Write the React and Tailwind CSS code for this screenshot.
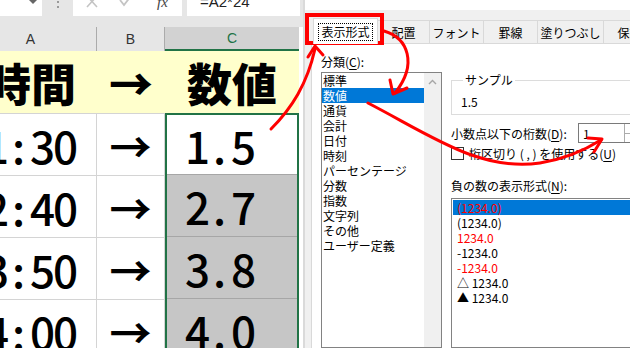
import React from 'react';

const categories = [ '標準', '数値', '通貨', '会計', '日付', '時刻', 'パーセンテージ', '分数', '指数', '文字列', 'その他', 'ユーザー定義' ];

const negatives = [
    { text: '(1234.0)', red: true },
    { text: '(1234.0)' },
    { text: '1234.0', red: true },
    { text: '-1234.0' },
    { text: '-1234.0', red: true },
    { text: '△ 1234.0' },
    { text: '▲ 1234.0' },
];

const rows = [
    { time: '1:30', value: '1.5' },
    { time: '2:40', value: '2.7' },
    { time: '3:50', value: '3.8' },
    { time: '4:00', value: '4.0' },
];

const tabs = [
    { label: '配置', width: 'w-[52px]' },
    { label: 'フォント', width: 'w-[54px]' },
    { label: '罫線', width: 'w-[54px]' },
    { label: '塗りつぶし', width: 'w-[66px]' },
    { label: '保護', width: 'w-[52px]' },
];

// fixed pitch characters, like the half-width digits in the sheet
const Digits = ({ text }) => (
    <div className="flex">
        { text.split('').map((ch, i) => <span key={ i } className="w-[23px] text-center">{ ch }</span>) }
    </div>
);

const TopBar = () => (
    <div className="h-[16px] bg-[#e6e6e6] flex shrink-0 overflow-hidden">
        <div className="w-[42px] bg-white relative">
            <svg className="absolute left-[29px] top-0" width="8" height="4" viewBox="0 0 8 4"><path d="M0 0 L8 0 L4 4 Z" fill="#666" /></svg>
        </div>
        <div className="w-[31px] flex flex-col items-center gap-[3px] pt-[1px]">
            <div className="w-[2px] h-[2px] bg-[#999]" />
            <div className="w-[2px] h-[2px] bg-[#999]" />
        </div>
        <div className="w-[109px] bg-white flex items-start">
            <svg className="ml-[13px] -mt-[5px]" width="12" height="13" viewBox="0 0 12 13"><path d="M1 1 L11 12 M11 1 L1 12" stroke="#c4c4c4" strokeWidth="1.6" fill="none" /></svg>
            <svg className="ml-[21px] -mt-[5px]" width="13" height="12" viewBox="0 0 13 12"><path d="M1 5 L5 10 L12 1" stroke="#c4c4c4" strokeWidth="1.8" fill="none" /></svg>
            <span className="ml-[25px] -mt-[9px] italic font-['Liberation_Serif',serif] text-[15px] text-[#444]">fx</span>
        </div>
        <div className="w-[5px]" />
        <div className="flex-1 mr-[3px] bg-white pl-[13px]">
            <div className="-mt-[9px] text-[15px] text-[#222] font-['Liberation_Sans',sans-serif]">=A2*24</div>
        </div>
    </div>
);

const Sheet = () => (
    <div className="w-[303px] shrink-0 flex flex-col bg-white overflow-hidden">
        <TopBar />
        <div className="h-[11px] bg-[#e6e6e6] shrink-0" />
        <div className="flex -ml-[35px] font-['Noto_Sans_CJK_JP',sans-serif] text-black">
            {/* column A */}
            <div className="w-[132px] shrink-0 flex flex-col">
                <div className="h-[24px] bg-[#e6e6e6] border-r border-[#ababab] flex items-center justify-center text-[14px] text-[#333] font-['Liberation_Sans',sans-serif]">A</div>
                <div className="h-[63px] bg-[#ffffcc] border-b border-[#d4d4d4] flex items-center justify-center text-[45px] font-black leading-none">時間</div>
                {
                    rows.map((row, i) => (
                        <div key={ i } className="h-[62px] border-b border-r border-[#d4d4d4] flex items-center justify-end pr-[20px] text-[44px] font-medium leading-none">
                            <Digits text={ row.time } />
                        </div>
                    ))
                }
            </div>
            {/* column B */}
            <div className="w-[68px] shrink-0 flex flex-col">
                <div className="h-[24px] bg-[#e6e6e6] border-r border-[#ababab] flex items-center justify-center text-[14px] text-[#333] font-['Liberation_Sans',sans-serif]">B</div>
                <div className="h-[63px] bg-[#ffffcc] border-b border-[#d4d4d4] flex items-center justify-center text-[44px] font-black leading-none">→</div>
                {
                    rows.map((_, i) => (
                        <div key={ i } className="h-[62px] border-b border-r border-[#d4d4d4] flex items-center justify-center text-[42px] font-bold leading-none">→</div>
                    ))
                }
            </div>
            {/* column C, with the selection */}
            <div className="w-[134px] shrink-0 flex flex-col">
                <div className="h-[24px] bg-[#d2d2d2] border-b-2 border-[#217346] flex items-center justify-center text-[14px] text-[#217346] font-['Liberation_Sans',sans-serif]">C</div>
                <div className="h-[62px] bg-[#ffffcc] flex items-center justify-center text-[45px] font-black leading-none">数値</div>
                <div className="border-2 border-[#217346] flex flex-col">
                    {
                        rows.map((row, i) => (
                            <div key={ i } className={ `${ i === 0 ? 'h-[60px] bg-white' : 'h-[62px] bg-[#c6c6c6]' } border-b border-[#a6a6a6] flex items-center pl-[18px] text-[44px] font-medium leading-none` }>
                                <Digits text={ row.value } />
                            </div>
                        ))
                    }
                </div>
            </div>
        </div>
    </div>
);

const Underlined = ({ before, letter, after }) => (
    <span>{ before }<span className="underline underline-offset-2">{ letter }</span>{ after }</span>
);

const Dialog = () => (
    <div className="flex-1 flex flex-col bg-[#f0f0f0] border-l-2 border-[#dadada] font-['Noto_Sans_CJK_JP',sans-serif] text-[12px] text-black leading-[15px]">
        <div className="h-[10px] bg-white shrink-0" />
        <div className="h-[33px] shrink-0 flex items-end pl-[8px]">
            <div className="w-[65px] h-[26px] bg-white border border-b-0 border-[#d9d9d9] flex items-center justify-center relative z-10 -mb-px">
                <span className="border border-dotted border-black px-[2px] leading-[16px]">表示形式</span>
            </div>
            {
                tabs.map((tab) => (
                    <div key={ tab.label } className={ `${ tab.width } h-[23px] shrink-0 border border-l-0 border-b-0 border-[#d9d9d9] flex items-center justify-center` }>{ tab.label }</div>
                ))
            }
        </div>
        <div className="flex-1 ml-[6px] bg-white border-l border-t border-[#d9d9d9] flex pl-[9px]">
            {/* category list */}
            <div className="w-[121px] shrink-0 flex flex-col">
                <div className="mt-[9px] h-[17px] flex items-center"><Underlined before="分類(" letter="C" after="):" /></div>
                <div className="mt-[2px] flex-1 border border-[#828282] flex">
                    <div className="flex-1 flex flex-col">
                        {
                            categories.map((c, i) => (
                                <div key={ c } className={ `h-[15px] leading-[15px] flex items-center pl-[1px] ${ i === 1 ? 'bg-[#0078d7] text-white' : '' }` }>{ c }</div>
                            ))
                        }
                    </div>
                    <div className="w-[17px] bg-[#f0f0f0] flex justify-center pt-[6px]">
                        <svg width="9" height="6" viewBox="0 0 9 6"><path d="M1 5 L4.5 1.5 L8 5" stroke="#a6a6a6" strokeWidth="1.4" fill="none" /></svg>
                    </div>
                </div>
            </div>
            {/* right side */}
            <div className="ml-[9px] w-[200px] shrink-0 flex flex-col">
                <fieldset className="mt-[28px] border border-[#dcdcdc] px-[8px] pb-[4px]">
                    <legend className="ml-[3px] px-[2px] leading-[16px]">サンプル</legend>
                    <div className="mt-[6px] h-[16px] pl-[1px]">1.5</div>
                </fieldset>
                <div className="mt-[8px] h-[20px] flex items-center">
                    <div className="w-[127px]"><Underlined before="小数点以下の桁数(" letter="D" after="):" /></div>
                    <div className="w-[68px] h-[20px] border border-[#7a7a7a] flex">
                        <div className="flex-1 pl-[4px] flex items-center">1</div>
                        <div className="w-[21px] border-l border-[#acacac] flex flex-col">
                            <div className="flex-1 border-b border-[#acacac]" />
                            <div className="flex-1" />
                        </div>
                    </div>
                </div>
                <div className="mt-[4px] h-[13px] flex items-center">
                    <div className="w-[13px] h-[13px] border border-[#333] bg-white" />
                    <div className="ml-[5px]"><Underlined before="桁区切り ( , ) を使用する(" letter="U" after=")" /></div>
                </div>
                <div className="mt-[17px] h-[16px] flex items-center"><Underlined before="負の数の表示形式(" letter="N" after="):" /></div>
                <div className="mt-[5px] flex-1 border border-[#828282] p-px flex flex-col">
                    {
                        negatives.map((n, i) => (
                            <div key={ i } className={ `h-[15px] leading-[15px] flex items-center pl-[4px] ${ i === 0 ? 'bg-[#0078d7]' : '' } ${ n.red ? 'text-[#ff0000]' : '' }` }>{ n.text }</div>
                        ))
                    }
                </div>
            </div>
        </div>
    </div>
);

const App = () => {
    return (
        <div className="w-[630px] h-[348px] relative overflow-hidden flex bg-white">
            <Sheet />
            <Dialog />
            {/* annotations on top */}
            <div className="absolute left-[305px] top-[13px] w-[79px] h-[32px] border-[4px] border-[#ff0000] pointer-events-none" />
            <svg className="absolute left-0 top-0 pointer-events-none" width="630" height="348" viewBox="0 0 630 348" fill="none" stroke="#ff0000" strokeWidth="3" strokeLinecap="round" strokeLinejoin="round">
                <path d="M271 129 C 292 108, 307 84, 315 49" />
                <path d="M308 57 L315 46 L323 55" />
                <path d="M384 31 C 408 38, 418 64, 395 93" />
                <path d="M390 80 L393 94 L407 88" />
                <path d="M368 103 C 430 135, 480 172, 540 163 C 565 159, 585 150, 601 140" />
                <path d="M588 138 L602 139 L594 152" />
            </svg>
        </div>
    );
}

export default App;
